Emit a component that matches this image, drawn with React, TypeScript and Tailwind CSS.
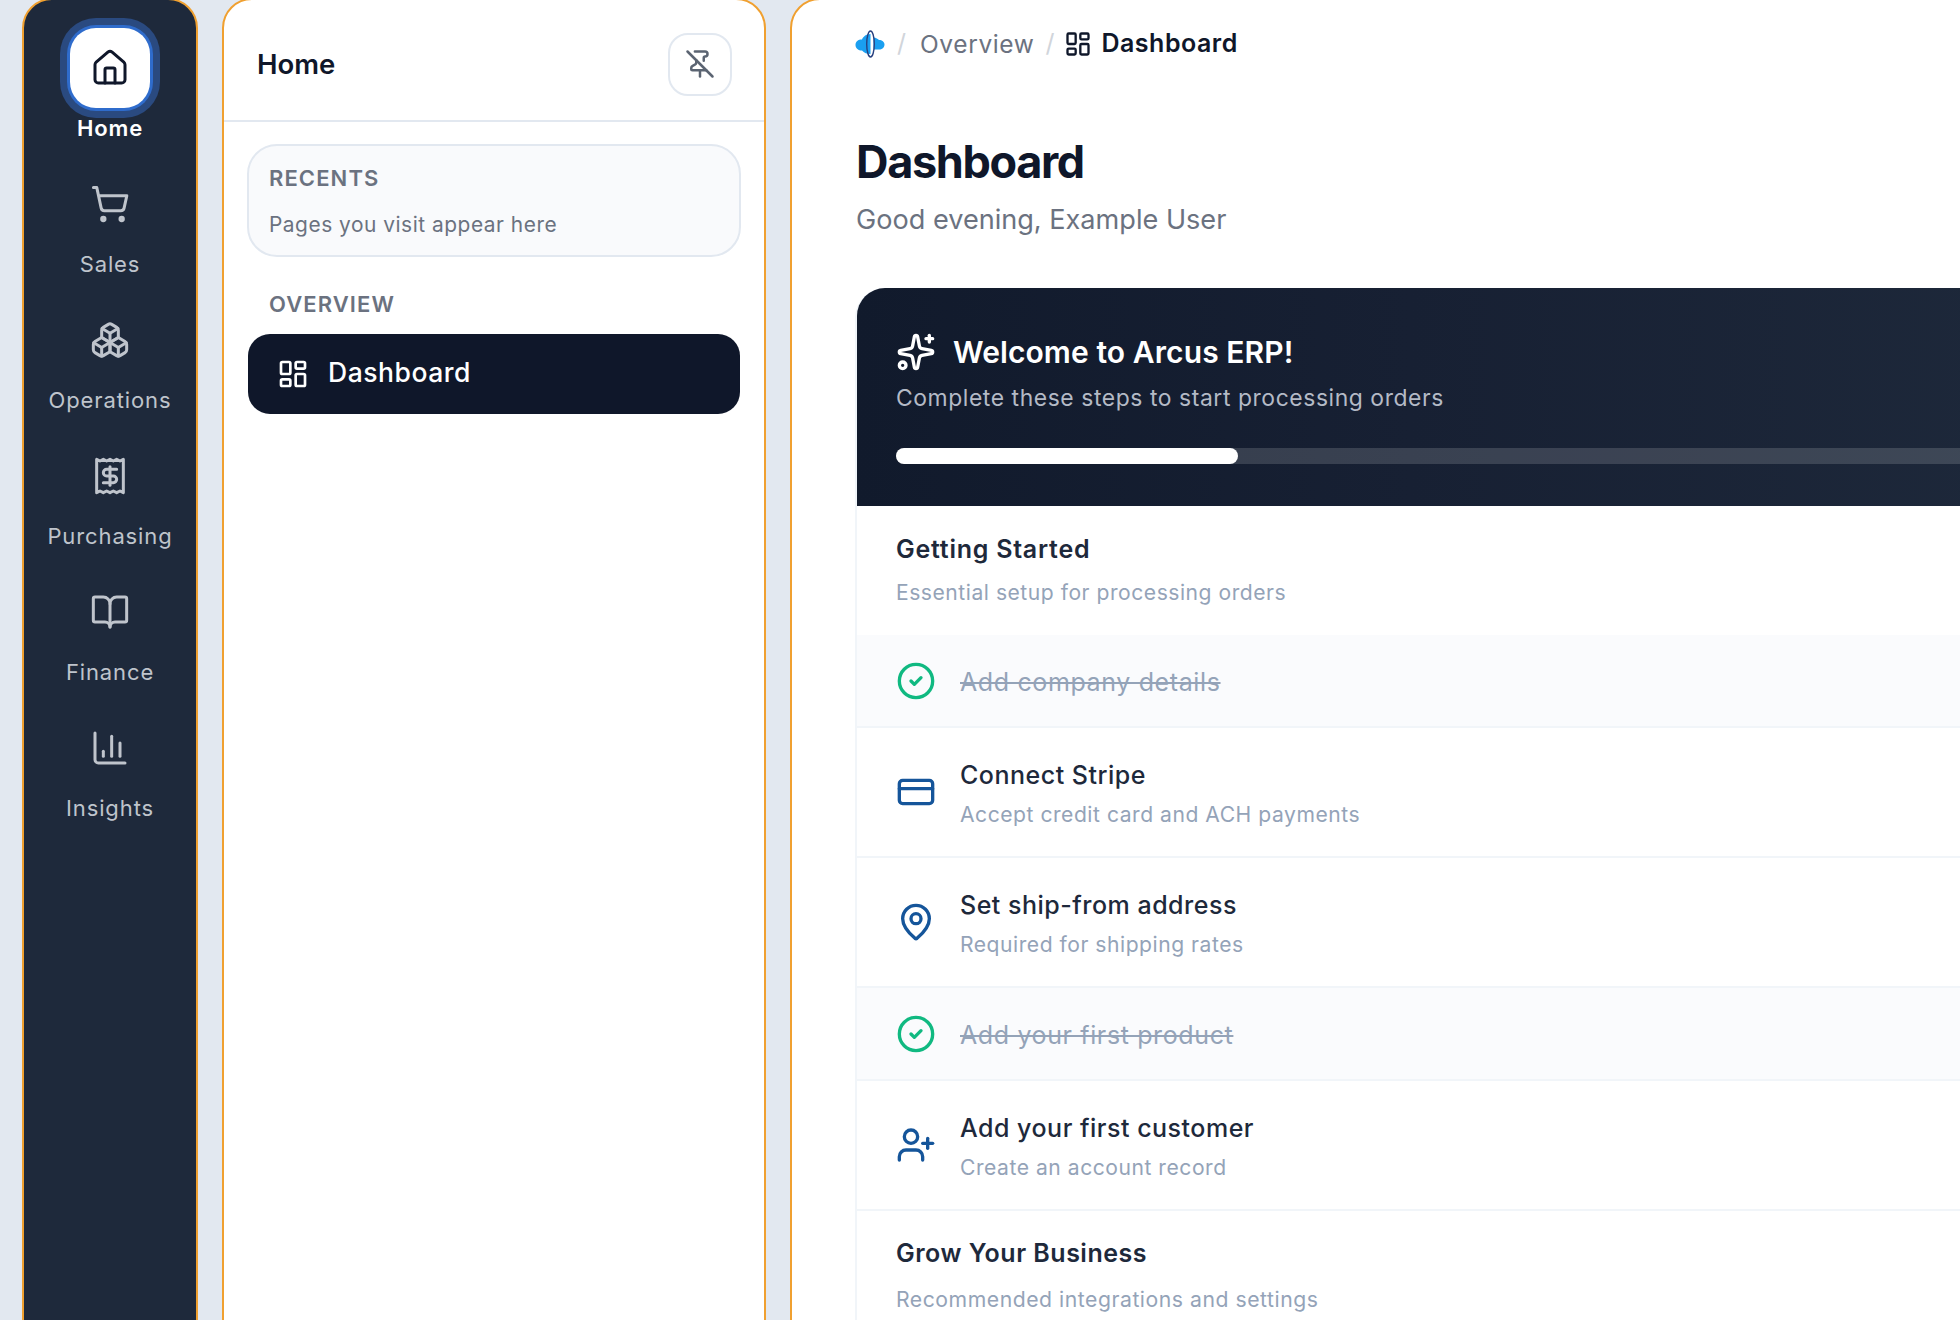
import React from "react";
import { House, ShoppingCart, Boxes, Receipt, BookOpen, ChartColumn, PinOff, LayoutDashboard, Sparkles, CircleCheck, CreditCard, MapPin, UserPlus } from "lucide-react";

const railItems = [
  { label: "Sales", Icon: ShoppingCart },
  { label: "Operations", Icon: Boxes },
  { label: "Purchasing", Icon: Receipt },
  { label: "Finance", Icon: BookOpen },
  { label: "Insights", Icon: ChartColumn },
];

function Logo() {
  return (
    <svg width="30" height="30" viewBox="0 0 30 30" fill="none">
      <ellipse cx="15.500" cy="15" rx="3.800" ry="13" fill="#ffffff" />
      <path d="M18.500 8.500C21 8.500 23 10 24 11c3 0 5.500 2 5.500 4.500 0 3-2.500 5-5.500 5h-5.500Z" fill="#1a9ff0" />
      <path d="M15.500 5C11 5 8 8 7 10.500 3 10.500.5 12.500.5 16s3 5.500 6.500 5.500C9 24 12 25 15.500 25Z" fill="#1a9ff0" />
      <ellipse cx="15.500" cy="15" rx="3.800" ry="13" stroke="#27407f" strokeWidth="1.400" fill="none" />
    </svg>
  );
}

function Done({ title }: { title: string }) {
  return (
    <div className="flex h-[93px] items-center gap-[24px] border-b-2 border-[#f1f5f9] bg-[#fafbfd] px-[39px]">
      <CircleCheck size={40} strokeWidth={2} className="shrink-0 text-[#10b981]" />
      <span className="pt-[5px] text-[25px] tracking-[0.025em] text-[#94a3b8] line-through">{title}</span>
    </div>
  );
}

function Step({ title, sub, Icon }: { title: string; sub: string; Icon: React.ElementType }) {
  return (
    <div className="flex h-[130px] items-center gap-[24px] border-b-2 border-[#f1f5f9] px-[39px]">
      <Icon size={40} strokeWidth={2} className="shrink-0 text-[#15559a]" />
      <div className="flex flex-col gap-[10px] pt-[6px]">
        <span className="text-[25px] leading-[30px] font-medium tracking-[0.02em] text-[#1e293b]">{title}</span>
        <span className="text-[21.100px] leading-[30px] tracking-[0.025em] text-[#94a3b8]">{sub}</span>
      </div>
    </div>
  );
}

export default function App() {
  return (
    <div className="h-[1320px] w-[1960px] overflow-hidden bg-[#e2e8f0] font-['Inter',sans-serif]">
      <div className="-mt-[2px] ml-[22px] flex h-[1400px] w-[2200px] gap-[24px]">
        {/* Rail */}
        <nav className="flex w-[176px] shrink-0 flex-col items-center rounded-[30px] border-2 border-[#f0a030] bg-[#1e293b] pt-[28px]">
          <div className="flex h-[136px] w-full flex-col items-center">
            <div className="flex h-[80px] w-[80px] items-center justify-center rounded-[26px] bg-white shadow-[0_0_0_3px_#2f6ccc,0_0_0_10px_#2a4a80]">
              <House size={40} strokeWidth={1.8} className="text-[#0f172a]" />
            </div>
            <span className="mt-[5px] text-[22px] leading-[30px] font-semibold tracking-[0.04em] text-white">Home</span>
          </div>
          {railItems.map(({ label, Icon }) => (
            <div key={label} className="flex h-[136px] w-full flex-col items-center">
              <div className="flex h-[80px] w-[80px] items-center justify-center">
                <Icon size={40} strokeWidth={1.8} className="text-[#bfc4cc]" />
              </div>
              <span className="mt-[5px] text-[22px] leading-[30px] tracking-[0.04em] text-[#bfc4cc]">{label}</span>
            </div>
          ))}
        </nav>

        {/* Middle panel */}
        <aside className="flex w-[544px] shrink-0 flex-col rounded-[30px] border-2 border-[#f0a030] bg-white">
          <div className="flex h-[122px] items-center justify-between border-b-2 border-[#e2e8f0] pt-[8px] pr-[32px] pl-[33px]">
            <span className="mt-[2px] text-[27.500px] font-semibold text-[#0f172a]">Home</span>
            <button className="flex h-[63px] w-[64px] items-center justify-center rounded-[20px] border-2 border-[#e2e8f0] bg-white">
              <PinOff size={30} strokeWidth={2} className="text-[#5b6472]" />
            </button>
          </div>
          <div className="px-[23px] pt-[22px]">
            <div className="flex h-[113px] flex-col justify-center gap-[21px] rounded-[30px] border-2 border-[#e2e8f0] bg-[#f9fafc] px-[20px] pt-[1px]">
              <span className="text-[22px] leading-[26px] font-semibold tracking-[0.05em] text-[#6b7280]">RECENTS</span>
              <span className="text-[20.900px] leading-[26px] tracking-[0.025em] text-[#6b7280]">Pages you visit appear here</span>
            </div>
            <div className="mt-[33px] px-[22px] text-[22px] leading-[28px] font-semibold tracking-[0.05em] text-[#6b7280]">OVERVIEW</div>
            <div className="mx-[1px] mt-[16px] flex h-[80px] items-center gap-[19px] rounded-[22px] bg-[#0f172a] px-[29px]">
              <LayoutDashboard size={32} strokeWidth={2} className="text-white" />
              <span className="pb-[2px] text-[26.500px] font-medium tracking-[0.02em] text-white">Dashboard</span>
            </div>
          </div>
        </aside>

        {/* Main */}
        <main className="flex w-[1300px] shrink-0 flex-col rounded-[30px] border-2 border-[#f0a030] bg-white pl-[63px]">
          <div className="flex h-[60px] items-end">
            <div className="flex h-[32px] items-center">
              <Logo />
              <span className="mr-[14px] ml-[12px] text-[25px] text-[#d1d5db]">/</span>
              <span className="text-[24.500px] tracking-[0.025em] text-[#6b7280]">Overview</span>
              <span className="mr-[10px] ml-[11px] text-[25px] text-[#d1d5db]">/</span>
              <LayoutDashboard size={28} strokeWidth={2} className="text-[#0f172a]" />
              <span className="ml-[9px] text-[25px] font-semibold tracking-[0.02em] text-[#0f172a]">Dashboard</span>
            </div>
          </div>
          <h1 className="mt-[74px] ml-[1px] text-[45px] leading-[56px] font-bold tracking-[-0.03em] text-[#0f172a]">Dashboard</h1>
          <p className="mt-[12px] ml-[1px] text-[27.100px] leading-[36px] text-[#6b7280]">Good evening, Example User</p>
          <section className="mt-[50px] rounded-tl-[30px] border-l-2 border-[#f1f5f9]">
            <header className="h-[218px] rounded-tl-[28px] bg-linear-to-r from-[#111a2c] via-[#172033] via-45% to-[#1e293b] px-[39px] pt-[44px]">
              <div className="flex items-center gap-[17px]">
                <Sparkles size={40} strokeWidth={2} className="text-white" />
                <span className="text-[30px] leading-[40px] font-semibold tracking-[0.003em] text-white">Welcome to Arcus ERP!</span>
              </div>
              <p className="mt-[8px] text-[22.900px] leading-[36px] tracking-[0.025em] text-[#b4bac6]">Complete these steps to start processing orders</p>
              <div className="mt-[32px] h-[16px] rounded-l-full bg-white/15">
                <div className="h-full w-[342px] rounded-full bg-white" />
              </div>
            </header>
            <div className="flex h-[129px] flex-col justify-center gap-[14px] px-[39px]">
              <span className="text-[25px] leading-[30px] font-semibold tracking-[0.03em] text-[#1e293b]">Getting Started</span>
              <span className="text-[21.100px] leading-[30px] tracking-[0.025em] text-[#94a3b8]">Essential setup for processing orders</span>
            </div>
            <Done title="Add company details" />
            <Step title="Connect Stripe" sub="Accept credit card and ACH payments" Icon={CreditCard} />
            <Step title="Set ship-from address" sub="Required for shipping rates" Icon={MapPin} />
            <Done title="Add your first product" />
            <Step title="Add your first customer" sub="Create an account record" Icon={UserPlus} />
            <div className="flex h-[128px] flex-col justify-center gap-[16px] px-[39px] pt-[1px]">
              <span className="text-[25px] leading-[30px] font-semibold tracking-[0.02em] text-[#1e293b]">Grow Your Business</span>
              <span className="text-[21.200px] leading-[30px] tracking-[0.025em] text-[#94a3b8]">Recommended integrations and settings</span>
            </div>
          </section>
        </main>
      </div>
    </div>
  );
}
